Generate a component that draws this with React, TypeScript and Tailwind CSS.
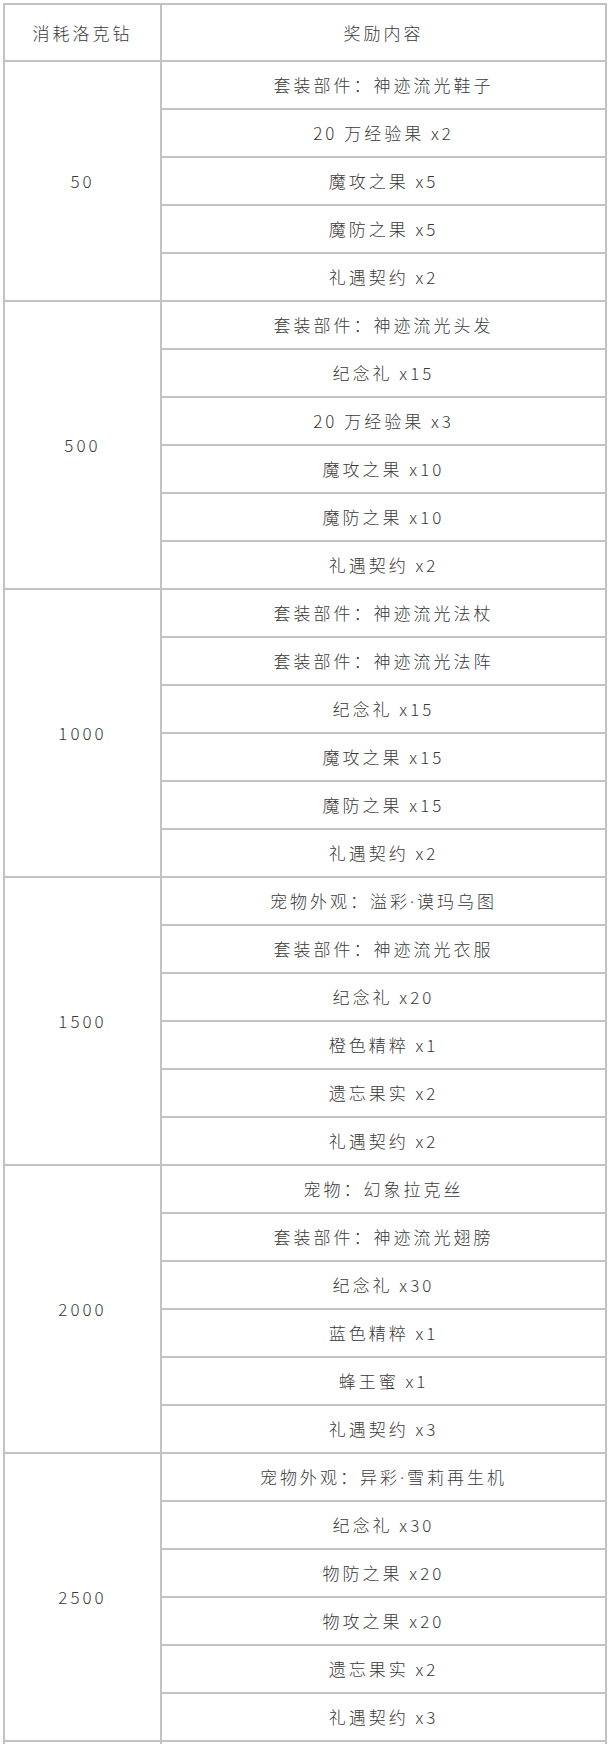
const sections: { cost: string; rewards: string[] }[] = [
  {
    cost: "50",
    rewards: ["套装部件：神迹流光鞋子", "20 万经验果 x2", "魔攻之果 x5", "魔防之果 x5", "礼遇契约 x2"],
  },
  {
    cost: "500",
    rewards: [
      "套装部件：神迹流光头发",
      "纪念礼 x15",
      "20 万经验果 x3",
      "魔攻之果 x10",
      "魔防之果 x10",
      "礼遇契约 x2",
    ],
  },
  {
    cost: "1000",
    rewards: [
      "套装部件：神迹流光法杖",
      "套装部件：神迹流光法阵",
      "纪念礼 x15",
      "魔攻之果 x15",
      "魔防之果 x15",
      "礼遇契约 x2",
    ],
  },
  {
    cost: "1500",
    rewards: [
      "宠物外观：溢彩·谟玛乌图",
      "套装部件：神迹流光衣服",
      "纪念礼 x20",
      "橙色精粹 x1",
      "遗忘果实 x2",
      "礼遇契约 x2",
    ],
  },
  {
    cost: "2000",
    rewards: [
      "宠物：幻象拉克丝",
      "套装部件：神迹流光翅膀",
      "纪念礼 x30",
      "蓝色精粹 x1",
      "蜂王蜜 x1",
      "礼遇契约 x3",
    ],
  },
  {
    cost: "2500",
    rewards: [
      "宠物外观：异彩·雪莉再生机",
      "纪念礼 x30",
      "物防之果 x20",
      "物攻之果 x20",
      "遗忘果实 x2",
      "礼遇契约 x3",
    ],
  },
  // next tier, cut off by the bottom edge
  { cost: "", rewards: [""] },
];

const cell =
  "border-2 border-[#c2c2c2] text-center align-middle font-light text-[17px] tracking-[3px] text-[#3a3a3a]";

// middle dot should stay narrow, like the latin glyph
function Reward({ text }: { text: string }) {
  const parts = text.split("·");
  if (parts.length === 1) return <>{text}</>;
  return (
    <>
      {parts[0]}
      <span style={{ fontFamily: '"Noto Sans", sans-serif' }}>·</span>
      {parts[1]}
    </>
  );
}

export default function App() {
  return (
    <div
      className="h-[1744px] overflow-hidden bg-white pl-[3px] pt-[3px]"
      style={{ fontFamily: '"Noto Sans CJK SC", "Noto Sans", sans-serif' }}
    >
      <table className="w-[604px] table-fixed border-collapse">
        <colgroup>
          <col className="w-[157px]" />
          <col />
        </colgroup>
        <thead>
          <tr>
            <th className={`${cell} h-[57px]`}>消耗洛克钻</th>
            <th className={`${cell} h-[57px]`}>奖励内容</th>
          </tr>
        </thead>
        <tbody>
          {sections.map((s, si) =>
            s.rewards.map((r, i) => (
              <tr key={`${si}-${i}`}>
                {i === 0 && (
                  <td rowSpan={s.rewards.length} className={cell}>
                    {s.cost}
                  </td>
                )}
                <td className={`${cell} h-[48px]`}>
                  <Reward text={r} />
                </td>
              </tr>
            )),
          )}
        </tbody>
      </table>
    </div>
  );
}
